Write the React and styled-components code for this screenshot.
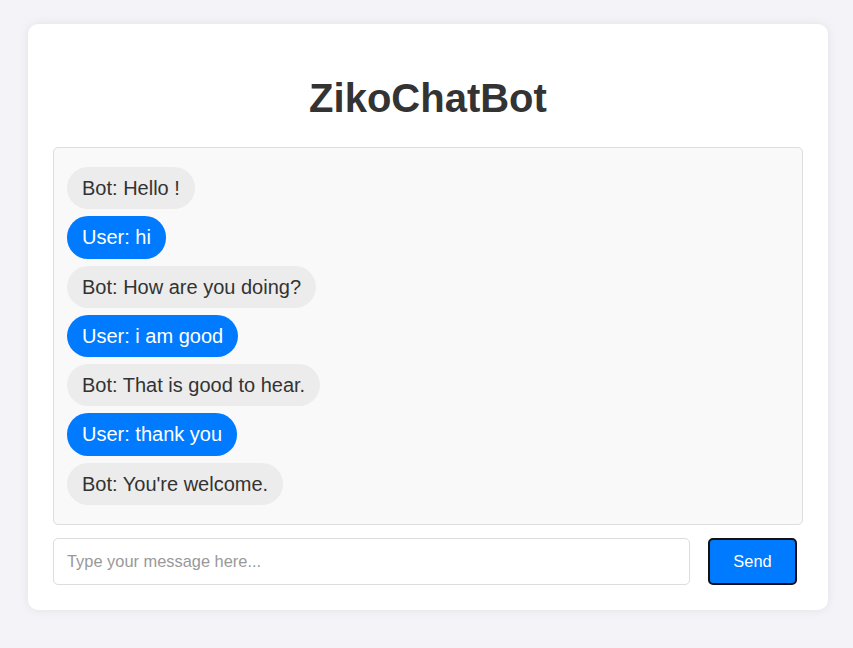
import React from 'react';
import styled, { createGlobalStyle } from 'styled-components';

const messages = [
  { from: 'bot', text: 'Bot: Hello !' },
  { from: 'user', text: 'User: hi' },
  { from: 'bot', text: 'Bot: How are you doing?' },
  { from: 'user', text: 'User: i am good' },
  { from: 'bot', text: 'Bot: That is good to hear.' },
  { from: 'user', text: 'User: thank you' },
  { from: 'bot', text: "Bot: You're welcome." },
];

const App = () => {
  return (
    <>
      <GlobalStyle />
      <Card>
        <Title>ZikoChatBot</Title>
        <ChatBox>
          {messages.map((m, i) => (
            <Bubble key={i} user={m.from === 'user' ? 1 : 0}>
              {m.text}
            </Bubble>
          ))}
        </ChatBox>
        <InputRow>
          <MessageInput type='text' placeholder='Type your message here...' />
          <SendButton>Send</SendButton>
        </InputRow>
      </Card>
    </>
  );
};

export default App;

const GlobalStyle = createGlobalStyle`
  body {
    margin: 0;
    padding: 24px 0 24px 28px;
    background-color: #f4f4f8;
    font-family: "Liberation Sans", Arial, sans-serif;
  }
`;

const Card = styled.div`
  width: 800px;
  box-sizing: border-box;
  background-color: #fff;
  border-radius: 10px;
  box-shadow: 0 0 10px rgba(0, 0, 0, 0.08);
  padding: 25px;
`;

const Title = styled.h1`
  margin: 26px 0;
  text-align: center;
  font-size: 40px;
  font-weight: 700;
  line-height: 46px;
  color: #333;
`;

const ChatBox = styled.div`
  display: flex;
  flex-direction: column;
  align-items: flex-start;
  gap: 7px;
  padding: 19px 13px;
  border: 1px solid #ddd;
  border-radius: 5px;
  background-color: #f9f9f9;
`;

const Bubble = styled.div`
  padding: 9px 15px;
  border-radius: 21px;
  font-size: 20px;
  line-height: 24.3px;
  background-color: ${(p) => (p.user ? '#007bff' : '#ececec')};
  color: ${(p) => (p.user ? '#fff' : '#333')};
`;

const InputRow = styled.div`
  display: flex;
  align-items: stretch;
  margin-top: 13px;
  padding-right: 6px;
`;

const MessageInput = styled.input`
  flex: 1;
  height: 47px;
  box-sizing: border-box;
  padding: 0 13px;
  border: 1px solid #ddd;
  border-radius: 5px;
  font-family: "Liberation Sans", Arial, sans-serif;
  font-size: 16.4px;
  color: #333;
  outline: none;
  &::placeholder {
    color: #999;
  }
`;

const SendButton = styled.button`
  width: 89px;
  height: 47px;
  margin-left: 18px;
  box-sizing: border-box;
  border: 2px solid #111;
  border-radius: 5px;
  background-color: #007bff;
  color: #fff;
  font-family: "Liberation Sans", Arial, sans-serif;
  font-size: 16.4px;
  cursor: pointer;
`;
